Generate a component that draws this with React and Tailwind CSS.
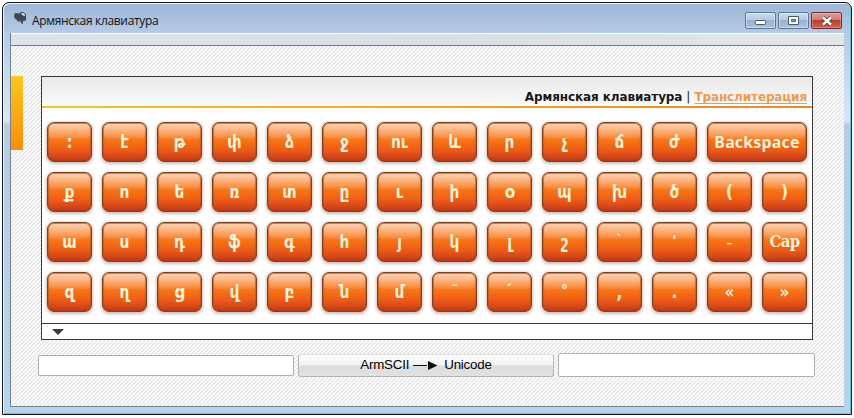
const ROWS = [
  [':', 'է', 'թ', 'փ', 'ձ', 'ջ', 'ու', 'և', 'ր', 'չ', 'ճ', 'ժ', 'Backspace'],
  ['ք', 'ո', 'ե', 'ռ', 'տ', 'ը', 'ւ', 'ի', 'օ', 'պ', 'խ', 'ծ', '(', ')'],
  ['ա', 'ս', 'դ', 'ֆ', 'գ', 'հ', 'յ', 'կ', 'լ', 'շ', '`', "'", '-', 'Cap'],
  ['զ', 'ղ', 'ց', 'վ', 'բ', 'ն', 'մ', '˜', '՛', '°', ',', '.', '«', '»'],
];

const MARKS = ['`', "'", '˜', '՛', '°'];

function Key({ label }) {
  const wide = label === 'Backspace';
  const face =
    label === 'Cap'
      ? "font-['DejaVu_Serif_Condensed','DejaVu_Serif',serif] font-bold text-[16.5px] tracking-[-0.6px]"
      : wide
        ? "font-['Noto_Sans',sans-serif] font-bold text-[16px] tracking-[0.15px]"
        : MARKS.includes(label)
          ? "font-['DejaVu_Sans',sans-serif] font-bold text-[14px] pb-1"
          : label === '-'
            ? "font-['DejaVu_Sans',sans-serif] text-[17px]"
            : "font-['DejaVu_Sans_Condensed','DejaVu_Sans',sans-serif] font-bold text-[17px]";
  return (
    <button
      className={
        (wide ? 'w-[100px] ' : 'w-[45px] ') +
        'relative flex h-10 shrink-0 items-center justify-center rounded-[7px] border border-[#7d411d] bg-[linear-gradient(#fa9a5c_0%,#f9822c_30%,#f66f12_52%,#ee5a18_72%,#c03a1a_100%)] text-[#fff5da] shadow-[0_1px_3px_1px_rgba(60,30,20,0.28),inset_0_0_1px_1px_rgba(150,65,20,0.35)]'
      }
    >
      <span className="absolute inset-x-[1px] top-[1px] h-[15px] rounded-t-[5px] rounded-b-[4px] bg-[linear-gradient(rgba(255,228,205,0.72),rgba(255,190,135,0.12))]" />
      <span className={'relative whitespace-nowrap leading-5 ' + face}>{label}</span>
    </button>
  );
}

function AppIcon() {
  return (
    <svg width="13" height="13" viewBox="0 0 13 13" className="shrink-0">
      <path d="M1 1l4 .5L7 0h2l3 2.500v6L9 9v3L7 11l-.5-2L4 10 3 8 1 7 0 4z" fill="#3f4852" />
      <path d="M7.500 1H9l2 2v1L8 3z" fill="#edf2f7" />
    </svg>
  );
}

function TitleBar() {
  const ctl =
    'flex h-[17px] w-[31px] items-center justify-center rounded-[2px] border border-[#5e7590] bg-[linear-gradient(#c8daee_0%,#b3c9e2_48%,#97b1cf_50%,#abc4df_100%)] shadow-[inset_0_0_0_1px_rgba(255,255,255,0.4)]';
  return (
    <header className="flex h-[30px] items-start pl-[11px] pr-[9px]">
      <div className="pt-[9px]">
        <AppIcon />
      </div>
      <h1 className="ml-[5px] mt-[10px] font-['Open_Sans','Noto_Sans',sans-serif] text-[12px] leading-4 tracking-[-0.33px] text-[#111]">
        Армянская клавиатура
      </h1>
      <div className="ml-auto flex gap-[2px] pt-[9px]">
        <button className={ctl}>
          <svg width="12" height="6" viewBox="0 0 12 6" className="mt-[5px]">
            <rect x=".5" y=".5" width="10" height="4" rx="1" fill="#fff" stroke="#4c5966" />
          </svg>
        </button>
        <button className={ctl}>
          <svg width="11" height="9" viewBox="0 0 11 9">
            <path d="M.5.5h10v8H.5zM3.500 3.500h4v2h-4z" fill="#fff" fillRule="evenodd" stroke="#4c5966" />
          </svg>
        </button>
        <button className="flex h-[17px] w-[31px] items-center justify-center rounded-[2px] border border-[#6c2b30] bg-[linear-gradient(#dda19a_0%,#d07c70_46%,#b93c2d_50%,#cd6650_100%)] shadow-[inset_0_0_0_1px_rgba(255,220,210,0.3)]">
          <svg width="12" height="10" viewBox="0 0 12 10">
            <path d="M2 1.500l8 7M10 1.500l-8 7" stroke="#59333a" strokeWidth="4" />
            <path d="M2 1.500l8 7M10 1.500l-8 7" stroke="#fff" strokeWidth="2.500" />
          </svg>
        </button>
      </div>
    </header>
  );
}

function KeyboardPanel() {
  return (
    <section className="flex h-[264px] w-[772px] flex-col border border-[#383838] bg-white">
      <div className="flex h-[29px] items-end justify-end bg-[linear-gradient(#e8e8e8,#fbfbfb)] pb-[1px] pr-[5px] font-['DejaVu_Sans',sans-serif] text-[12px] font-bold leading-4 text-[#181818]">
        <span className="tracking-[-0.1px]">Армянская клавиатура</span>
        <span className="mx-[4px] font-normal">|</span>
        <a className="tracking-[-0.12px] text-[#ee9b4c] underline underline-offset-2">Транслитерация</a>
      </div>
      <div className="h-[2px] bg-[linear-gradient(90deg,#efc631,#e98b1c)]" />
      <div className="flex flex-1 flex-col gap-[10px] pl-[5px] pt-[14px]">
        {ROWS.map((row, i) => (
          <div key={i} className="flex gap-[10px]">
            {row.map((label) => (
              <Key key={label} label={label} />
            ))}
          </div>
        ))}
      </div>
      <footer className="h-4 border-t border-[#383838] pl-[10px] pt-[5px]">
        <svg width="12" height="6" viewBox="0 0 12 6">
          <path d="M0 0h12L6 6z" fill="#3c3c3c" />
        </svg>
      </footer>
    </section>
  );
}

export default function App() {
  return (
    <div className="h-[418px] w-[854px] overflow-hidden bg-white pl-[2px] pt-[2px]">
      <div className="h-[413px] w-[850px] rounded-t-[7px] border border-[#10171d] bg-[linear-gradient(#9db7d8_0px,#b5cae4_30px,#c4d9ed_70px,#d8e7f4_118px,#b5cce3_122px,#b7d1e7_300px,#b4d5ea_100%)] shadow-[inset_1px_1px_0_#e8f4fb,inset_-1px_-1px_0_#58c9e8]">
        <TitleBar />
        <div className="ml-[7px] flex h-[374px] w-[834px] flex-col border-b border-l border-[#76828e] bg-white">
          <div className="h-[13px] shrink-0 border-b border-t border-b-[#75797d] border-t-white bg-[linear-gradient(90deg,#dde3e9,#d9dfe5_50%,#e3e5e8)]" />
          <main className="flex flex-1 bg-[repeating-linear-gradient(135deg,#e6e7e8_0px,#e6e7e8_0.8px,#fdfdfd_1.1px,#fdfdfd_2.828px)] pt-[30px]">
            <div className="h-[74px] w-3 bg-[linear-gradient(#ffc61c,#fb8e05)]" />
            <div className="ml-[15px]">
              <div className="ml-[3px]">
                <KeyboardPanel />
              </div>
              <div className="mt-[13px] flex items-center gap-1 font-['Liberation_Sans',sans-serif]">
                <input className="h-[21px] w-[256px] rounded-[2px] border border-[#b1b1b1] bg-white" />
                <button className="flex h-[23px] w-[256px] items-center justify-center rounded-[3px] border border-[#b5b5b5] border-t-[#dfdfdf] bg-[linear-gradient(#fdfdfd_0%,#f3f3f3_48%,#dcdcdc_52%,#e1e1e1_100%)] text-[13.33px] leading-4 tracking-[-0.2px] text-black">
                  <span>ArmSCII</span>
                  <svg width="25" height="11" viewBox="0 0 25 11" className="ml-[4px] mr-[6px]">
                    <path d="M0 5.500h14" stroke="#111" />
                    <path d="M15 1l9.500 4.500L15 10z" fill="#111" />
                  </svg>
                  <span>Unicode</span>
                </button>
                <input className="h-6 w-[257px] rounded-[2px] border border-[#b1b1b1] bg-white" />
              </div>
            </div>
          </main>
        </div>
      </div>
    </div>
  );
}
